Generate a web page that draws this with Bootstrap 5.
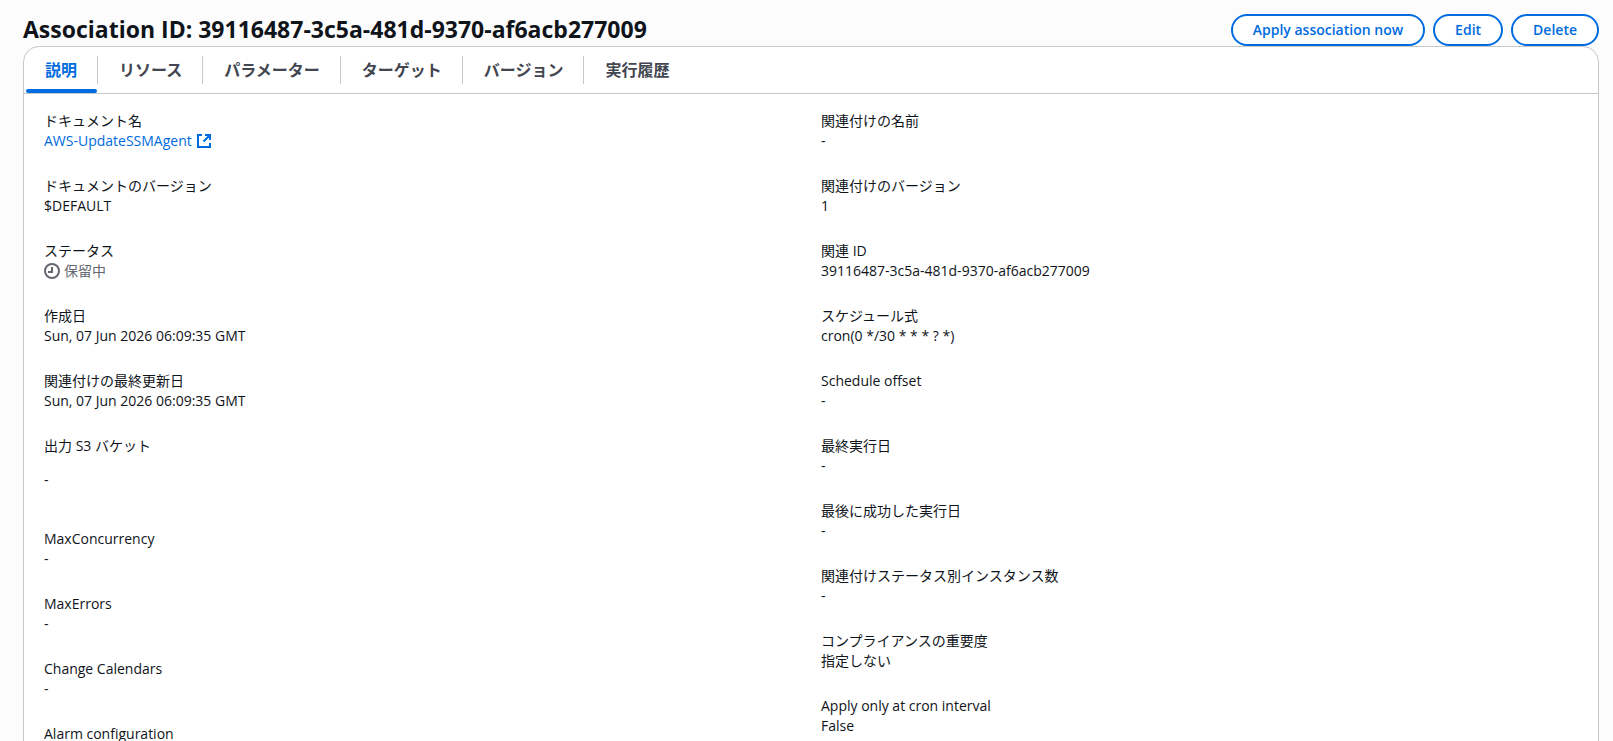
<!DOCTYPE html>
<html lang="ja">
<head>
<meta charset="utf-8">
<meta name="viewport" content="width=device-width, initial-scale=1">
<title>Association</title>
<link href="https://cdn.jsdelivr.net/npm/bootstrap@5.3.0/dist/css/bootstrap.min.css" rel="stylesheet">
<style>
  :root { --accent: #006ce0; --line: #c6c6cd; --ink: #0f141a; }
  body {
    background: #fcfcfd; color: var(--ink);
    font-family: "Open Sans", "Noto Sans CJK JP", sans-serif;
    font-size: 14px; line-height: 20px;
  }
  .page { padding: 14px 14px 24px 23px; }
  .page-title { font-size: 23px; line-height: 30px; font-weight: 700; }
  .btn-pill {
    --bs-btn-color: var(--accent); --bs-btn-bg: #fff; --bs-btn-border-color: var(--accent);
    --bs-btn-hover-color: #002b66; --bs-btn-hover-bg: #f0fbff; --bs-btn-hover-border-color: #002b66;
    --bs-btn-border-width: 2px; --bs-btn-padding-x: 20px; --bs-btn-padding-y: 4px;
    --bs-btn-font-size: 14px; --bs-btn-line-height: 20px; --bs-btn-font-weight: 600;
  }
  .panel { background: #fff; border: 1px solid var(--line); border-radius: 16px; }
  .panel-tabs { border-bottom: 1px solid var(--line); padding: 0 2px; }
  .panel-tabs .nav-item { padding: 9px 0; position: relative; }
  .panel-tabs .nav-item + .nav-item::before {
    content: ""; position: absolute; left: 0; top: 9px; bottom: 9px; border-left: 1px solid var(--line);
  }
  .panel-tabs .nav-link {
    color: #424650;
    font-size: 16px; line-height: 28px; font-weight: 700; padding: 0 20px 0 22px;
  }
  .panel-tabs .nav-link.active { color: var(--accent); padding: 0 20px 0 19px; }
  .panel-tabs .nav-link.active::after {
    content: ""; position: absolute; left: 0; right: 0; bottom: 0; height: 4px;
    border-radius: 2px; background: var(--accent);
  }
  .fields { padding: 17px 20px 24px; }
  .fields .row { --bs-gutter-x: 20px; }
  .field-list { display: grid; gap: 25px; margin: 0; }
  .field-list dt { font-weight: 400; }
  .field-list dd { margin: 0; }
  .field-list dd p { margin: 0; padding: 14px 0; }
  .field-list a { color: var(--accent); text-decoration: none; }
  .pending { color: #656871; }
</style>
</head>
<body>
<main class="page">
  <header class="d-flex flex-wrap justify-content-between align-items-start">
    <h1 class="page-title m-0">Association ID: 39116487-3c5a-481d-9370-af6acb277009</h1>
    <div class="d-flex gap-2">
      <button type="button" class="btn btn-pill rounded-pill">Apply association now</button>
      <button type="button" class="btn btn-pill rounded-pill">Edit</button>
      <button type="button" class="btn btn-pill rounded-pill">Delete</button>
    </div>
  </header>

  <section class="panel">
    <ul class="nav panel-tabs">
      <li class="nav-item"><a class="nav-link active" aria-current="page" href="#description">説明</a></li>
      <li class="nav-item"><a class="nav-link" href="#resources">リソース</a></li>
      <li class="nav-item"><a class="nav-link" href="#parameters">パラメーター</a></li>
      <li class="nav-item"><a class="nav-link" href="#targets">ターゲット</a></li>
      <li class="nav-item"><a class="nav-link" href="#versions">バージョン</a></li>
      <li class="nav-item"><a class="nav-link" href="#history">実行履歴</a></li>
    </ul>

    <div class="fields" id="description">
      <div class="row">
        <div class="col-6">
          <dl class="field-list">
            <div><dt>ドキュメント名</dt><dd><a href="#document" class="d-inline-flex align-items-center gap-1">AWS-UpdateSSMAgent
              <svg width="16" height="16" viewBox="0 0 16 16" fill="none" stroke="currentColor" stroke-width="2" aria-hidden="true"><path d="M14 10v4H2V2h4M9 2h5v5M7.500 8.500 14 2"/></svg></a></dd></div>
            <div><dt>ドキュメントのバージョン</dt><dd>$DEFAULT</dd></div>
            <div><dt>ステータス</dt><dd class="pending d-flex align-items-center gap-1">
              <svg width="16" height="16" viewBox="0 0 16 16" fill="none" stroke="currentColor" stroke-width="2" aria-hidden="true"><circle cx="8" cy="8" r="7"/><path d="M8 4v5H4"/></svg>保留中</dd></div>
            <div><dt>作成日</dt><dd>Sun, 07 Jun 2026 06:09:35 GMT</dd></div>
            <div><dt>関連付けの最終更新日</dt><dd>Sun, 07 Jun 2026 06:09:35 GMT</dd></div>
            <div><dt>出力 S3 バケット</dt><dd><p>-</p></dd></div>
            <div><dt>MaxConcurrency</dt><dd>-</dd></div>
            <div><dt>MaxErrors</dt><dd>-</dd></div>
            <div><dt>Change Calendars</dt><dd>-</dd></div>
            <div><dt>Alarm configuration</dt><dd>-</dd></div>
          </dl>
        </div>
        <div class="col-6">
          <dl class="field-list">
            <div><dt>関連付けの名前</dt><dd>-</dd></div>
            <div><dt>関連付けのバージョン</dt><dd>1</dd></div>
            <div><dt>関連 ID</dt><dd>39116487-3c5a-481d-9370-af6acb277009</dd></div>
            <div><dt>スケジュール式</dt><dd>cron(0 */30 * * * ? *)</dd></div>
            <div><dt>Schedule offset</dt><dd>-</dd></div>
            <div><dt>最終実行日</dt><dd>-</dd></div>
            <div><dt>最後に成功した実行日</dt><dd>-</dd></div>
            <div><dt>関連付けステータス別インスタンス数</dt><dd>-</dd></div>
            <div><dt>コンプライアンスの重要度</dt><dd>指定しない</dd></div>
            <div><dt>Apply only at cron interval</dt><dd>False</dd></div>
          </dl>
        </div>
      </div>
    </div>
  </section>
</main>
<script src="https://cdn.jsdelivr.net/npm/bootstrap@5.3.0/dist/js/bootstrap.bundle.min.js"></script>
</body>
</html>
